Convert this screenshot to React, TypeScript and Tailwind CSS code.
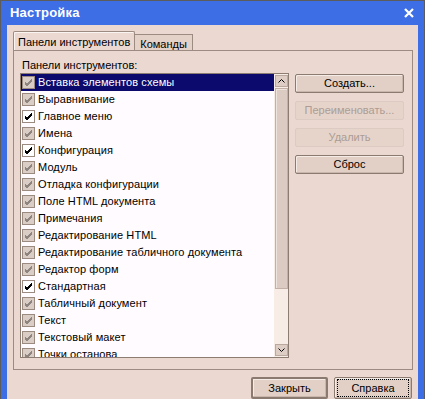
import React from "react";

const items: { label: string; on: boolean }[] = [
  { label: "Вставка элементов схемы", on: false },
  { label: "Выравнивание", on: false },
  { label: "Главное меню", on: true },
  { label: "Имена", on: false },
  { label: "Конфигурация", on: true },
  { label: "Модуль", on: false },
  { label: "Отладка конфигурации", on: false },
  { label: "Поле HTML документа", on: false },
  { label: "Примечания", on: false },
  { label: "Редактирование HTML", on: false },
  { label: "Редактирование табличного документа", on: false },
  { label: "Редактор форм", on: false },
  { label: "Стандартная", on: true },
  { label: "Табличный документ", on: false },
  { label: "Текст", on: false },
  { label: "Текстовый макет", on: false },
  { label: "Точки останова", on: false },
];

function Check({ on }: { on: boolean }) {
  return (
    <div
      className={
        "w-[13px] h-[13px] shrink-0 border border-[#9a8a80] flex items-center justify-center " +
        (on ? "bg-white" : "bg-[#d9cdc6]")
      }
    >
      <svg width="9" height="9" viewBox="0 0 9 9">
        <path
          d="M1 4 L3 6 L8 1 M1 5 L3 7 L8 2 M1 6 L3 8 L8 3"
          stroke={on ? "#000" : "#8f8580"}
          strokeWidth="1"
          fill="none"
          shapeRendering="crispEdges"
        />
      </svg>
    </div>
  );
}

function Btn({
  children,
  disabled,
  className,
}: {
  children: React.ReactNode;
  disabled?: boolean;
  className?: string;
}) {
  return (
    <div
      className={
        "flex items-center justify-center rounded-[2px] border " +
        (disabled
          ? "border-[#dccbc2] text-[#ac9c94] bg-[#e6d4cb]"
          : "border-[#8a7a70] text-black bg-[#e2d0c7] shadow-[inset_-1px_-1px_0_#c9b6ac,inset_1px_1px_0_#f6ece7]") +
        " " +
        (className ?? "")
      }
    >
      {children}
    </div>
  );
}

export default function App() {
  return (
    <div
      className="w-[425px] h-[399px] overflow-hidden bg-[#3d6ee6] border-t border-x border-[#5c5c5c] flex flex-col text-[11px] text-black"
      style={{ fontFamily: '"Liberation Sans", Arial, sans-serif' }}
    >
      {/* title bar */}
      <div className="h-[24px] shrink-0 flex items-center justify-between pl-[9px] pr-[10px]">
        <span className="text-white font-bold text-[13px] tracking-[0.2px]">Настройка</span>
        <svg width="10" height="10" viewBox="0 0 10 10">
          <path d="M1 1 L9 9 M9 1 L1 9" stroke="#fff" strokeWidth="2.2" />
        </svg>
      </div>
      {/* client */}
      <div className="flex-1 mx-[6px] bg-[#ebd9d1] flex flex-col px-[6px] pt-[7px]">
        {/* tabs */}
        <div className="flex items-end h-[18px] relative z-10">
          <div className="h-[19px] px-[4px] pt-[2px] border border-b-0 border-[#9c8b80] bg-[#ebd9d1] rounded-t-[2px] shadow-[inset_1px_1px_0_#fbf5f2]">
            Панели инструментов
          </div>
          <div className="h-[16px] px-[5px] pt-[1px] border border-l-0 border-b-0 border-[#9c8b80] bg-[#e4d1c8]">
            Команды
          </div>
        </div>
        {/* panel */}
        <div className="w-[400px] h-[320px] border border-[#9c8b80] flex flex-col pl-[6px] pr-[8px] pt-[6px]">
          <div className="pl-[2px] h-[16px]">Панели инструментов:</div>
          <div className="flex gap-[6px]">
            {/* listbox */}
            <div className="w-[270px] h-[285px] border border-[#8c7c72] bg-[#fffbfe] flex overflow-hidden">
              <div className="flex-1 flex flex-col overflow-hidden">
                {items.map((it, i) => (
                  <div
                    key={it.label}
                    className={
                      "h-[17px] shrink-0 flex items-center gap-[3px] pl-[1px] whitespace-nowrap " +
                      (i === 0 ? "bg-[#0c0a6c] text-white" : "")
                    }
                  >
                    <Check on={it.on} />
                    <span className="leading-none tracking-[0.1px]">{it.label}</span>
                  </div>
                ))}
              </div>
              {/* scrollbar */}
              <div className="w-[14px] h-full flex flex-col bg-[#f8ece7] pl-[1px] py-[1px]">
                <div className="h-[12px] border border-[#bba89e] bg-[#decdc5] flex items-center justify-center">
                  <svg width="7" height="4" viewBox="0 0 7 4">
                    <path d="M0.5 3.5 L3.5 0.5 L6.5 3.5" stroke="#000" fill="none" />
                  </svg>
                </div>
                <div className="h-[201px] mt-[1px] border border-[#c2afa5] bg-[#dccbc3] shadow-[inset_1px_1px_0_#efe3de]" />
                <div className="flex-1" />
                <div className="h-[12px] border border-[#bba89e] bg-[#decdc5] flex items-center justify-center">
                  <svg width="7" height="4" viewBox="0 0 7 4">
                    <path d="M0.5 0.5 L3.5 3.5 L6.5 0.5" stroke="#000" fill="none" />
                  </svg>
                </div>
              </div>
            </div>
            {/* side buttons */}
            <div className="flex flex-col gap-[8px] pt-[1px]">
              <Btn className="w-[109px] h-[19px]">Создать...</Btn>
              <Btn disabled className="w-[109px] h-[19px]">Переименовать...</Btn>
              <Btn disabled className="w-[109px] h-[19px]">Удалить</Btn>
              <Btn className="w-[109px] h-[19px]">Сброс</Btn>
            </div>
          </div>
        </div>
        {/* bottom buttons */}
        <div className="flex justify-end gap-[6px] pt-[7px] pr-[0px]">
          <Btn className="w-[77px] h-[22px] border-2 border-[#8a7a70]">Закрыть</Btn>
          <Btn className="w-[78px] h-[22px]">
            <span className="px-[10px] py-[2px] outline outline-1 outline-dotted outline-black w-[70px] h-[16px] flex items-center justify-center">
              Справка
            </span>
          </Btn>
        </div>
      </div>
    </div>
  );
}
